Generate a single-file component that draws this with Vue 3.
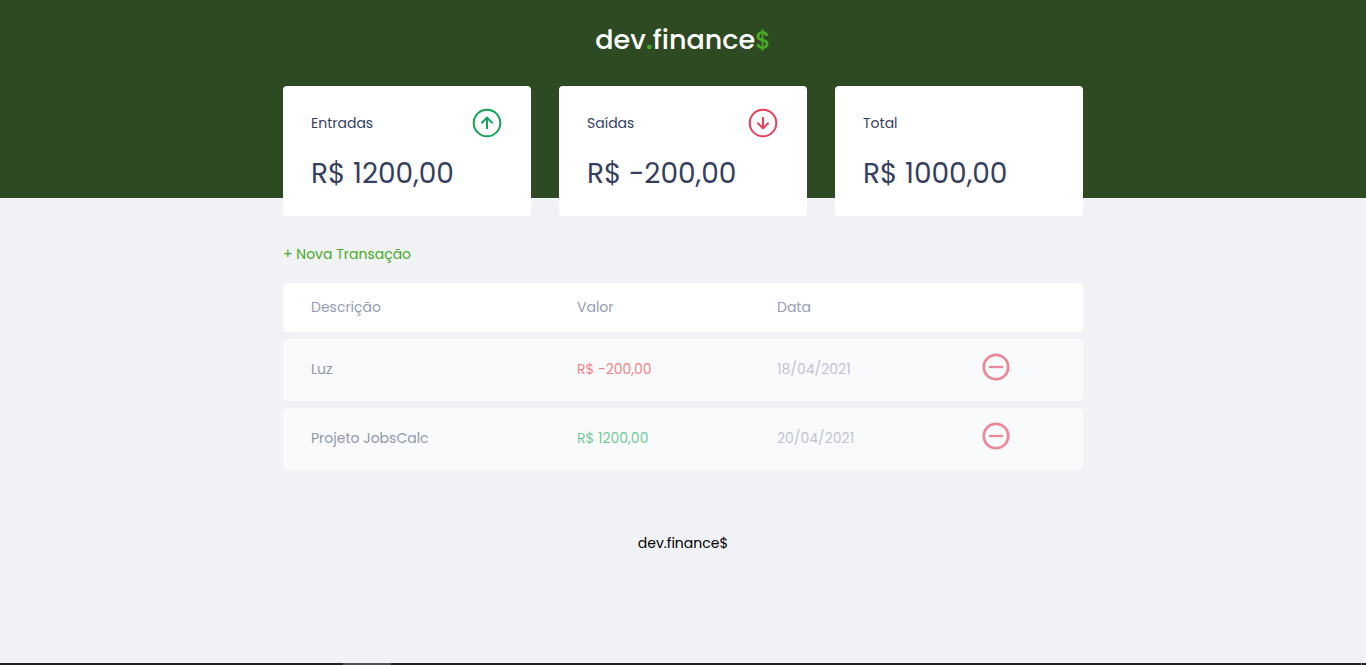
<script setup>
const cards = [
  { title: 'Entradas', value: 'R$ 1200,00', icon: 'up' },
  { title: 'Saídas', value: 'R$ -200,00', icon: 'down' },
  { title: 'Total', value: 'R$ 1000,00', icon: null },
]

const transactions = [
  { id: 1, description: 'Luz', amount: 'R$ -200,00', kind: 'expense', date: '18/04/2021' },
  { id: 2, description: 'Projeto JobsCalc', amount: 'R$ 1200,00', kind: 'income', date: '20/04/2021' },
]
</script>

<template>
  <div class="page">
    <header class="top">
      <h1 class="logo">dev<span class="dot">.</span>finance<span class="dollar">$</span></h1>
    </header>

    <main class="container">
      <section class="balance" aria-label="Balanço">
        <article v-for="card in cards" :key="card.title" class="card">
          <h2 class="card-title">
            <span>{{ card.title }}</span>
            <svg v-if="card.icon" class="card-icon" :class="card.icon" viewBox="0 0 32 32" aria-hidden="true">
              <circle cx="16" cy="16" r="13.3" />
              <path v-if="card.icon === 'up'" d="M16 22V10.6M10.4 16.2 16 10.6l5.6 5.6" />
              <path v-else d="M16 10v11.4M10.4 15.8l5.6 5.6 5.6-5.6" />
            </svg>
          </h2>
          <p class="card-value">{{ card.value }}</p>
        </article>
      </section>

      <section aria-label="Transações">
        <a href="#" class="new">+ Nova Transação</a>
        <table class="table">
          <colgroup>
            <col class="col-description" />
            <col class="col-amount" />
            <col class="col-date" />
            <col class="col-action" />
          </colgroup>
          <thead>
            <tr>
              <th>Descrição</th>
              <th>Valor</th>
              <th>Data</th>
              <th></th>
            </tr>
          </thead>
          <tbody>
            <tr v-for="item in transactions" :key="item.id">
              <td class="description">{{ item.description }}</td>
              <td :class="item.kind">{{ item.amount }}</td>
              <td class="date">{{ item.date }}</td>
              <td class="action">
                <button type="button" class="remove" aria-label="Remover transação">
                  <svg viewBox="0 0 28 28" aria-hidden="true">
                    <circle cx="14" cy="14" r="12.2" stroke-width="2.8" />
                    <path d="M7 14h14" stroke-width="2.2" />
                  </svg>
                </button>
              </td>
            </tr>
          </tbody>
        </table>
      </section>
    </main>

    <footer class="footer"><p>dev.finance$</p></footer>
    <div class="strip"><span class="strip-active"></span><span class="strip-end"></span></div>
  </div>
</template>

<style>
body {
  background: #f0f2f5;
}
</style>

<style scoped>
.page {
  display: flex;
  flex-direction: column;
  min-height: 100vh;
  font-family: Poppins, Inter, "Liberation Sans", sans-serif;
  font-size: 14px;
  line-height: 21px;
  color: #000;
}

.top {
  padding: 20px 0 138px;
  background: #2d4a22;
  text-align: center;
}

.logo {
  margin: 0;
  font-size: 27px;
  line-height: 40px;
  font-weight: 500;
  color: #fff;
}

.dot,
.dollar {
  color: #49aa26;
}

.dot {
  font-weight: 600;
}

.dollar {
  font-size: 24px;
  line-height: 1;
}

.container {
  box-sizing: border-box;
  width: 100%;
  max-width: 800px;
  margin: -112px auto 0;
}

.balance {
  display: grid;
  grid-template-columns: repeat(3, 1fr);
  gap: 28px;
}

.card {
  padding: 21px 28px;
  border-radius: 4px;
  background: #fff;
  color: #363f5f;
}

.card-title {
  display: flex;
  align-items: center;
  justify-content: space-between;
  height: 32px;
  margin: 0;
  font-size: 14px;
  font-weight: 400;
}

.card-icon {
  width: 32px;
  height: 32px;
  fill: none;
  stroke-width: 2;
}

.up {
  stroke: #12a454;
}

.down {
  stroke: #e83f5b;
}

.card-value {
  margin: 14px 0 0;
  font-size: 28px;
  line-height: 42px;
  font-weight: 400;
}

.new {
  display: inline-block;
  margin: 28px 0 11px;
  color: #49aa26;
  text-decoration: none;
}

.table {
  width: 100%;
  table-layout: fixed;
  border-spacing: 0 7px;
}

.col-amount {
  width: 200px;
}

.col-date {
  width: 205px;
}

.col-action {
  width: 129px;
}

th,
td {
  box-sizing: border-box;
  padding: 14px 28px;
  background: #fff;
  text-align: left;
  font-weight: 400;
}

th {
  color: #969cb3;
}

td {
  height: 62px;
  padding-bottom: 16px;
  background: #f9fafc;
}

th:first-child,
td:first-child {
  border-radius: 4px 0 0 4px;
}

th:last-child,
td:last-child {
  border-radius: 0 4px 4px 0;
}

.description {
  color: #9297a8;
}

.income {
  color: #73ca96;
}

.expense {
  color: #f28286;
}

.date {
  color: #c0c3d2;
}

.action {
  vertical-align: top;
}

.remove {
  display: block;
  width: 28px;
  height: 28px;
  padding: 0;
  border: 0;
  background: none;
  cursor: pointer;
}

.remove svg {
  display: block;
  width: 28px;
  height: 28px;
  fill: none;
  stroke: #ee8798;
}

.footer {
  padding: 56px 0 28px;
  text-align: center;
}

.footer p {
  margin: 0;
}

.strip {
  display: flex;
  height: 2px;
  margin-top: auto;
  background: #202022;
}

.strip-active {
  width: 48px;
  margin-left: 25.1%;
  background: #545456;
}

.strip-end {
  width: 1px;
  margin: 0 4px 0 auto;
  background: #777;
}
</style>
